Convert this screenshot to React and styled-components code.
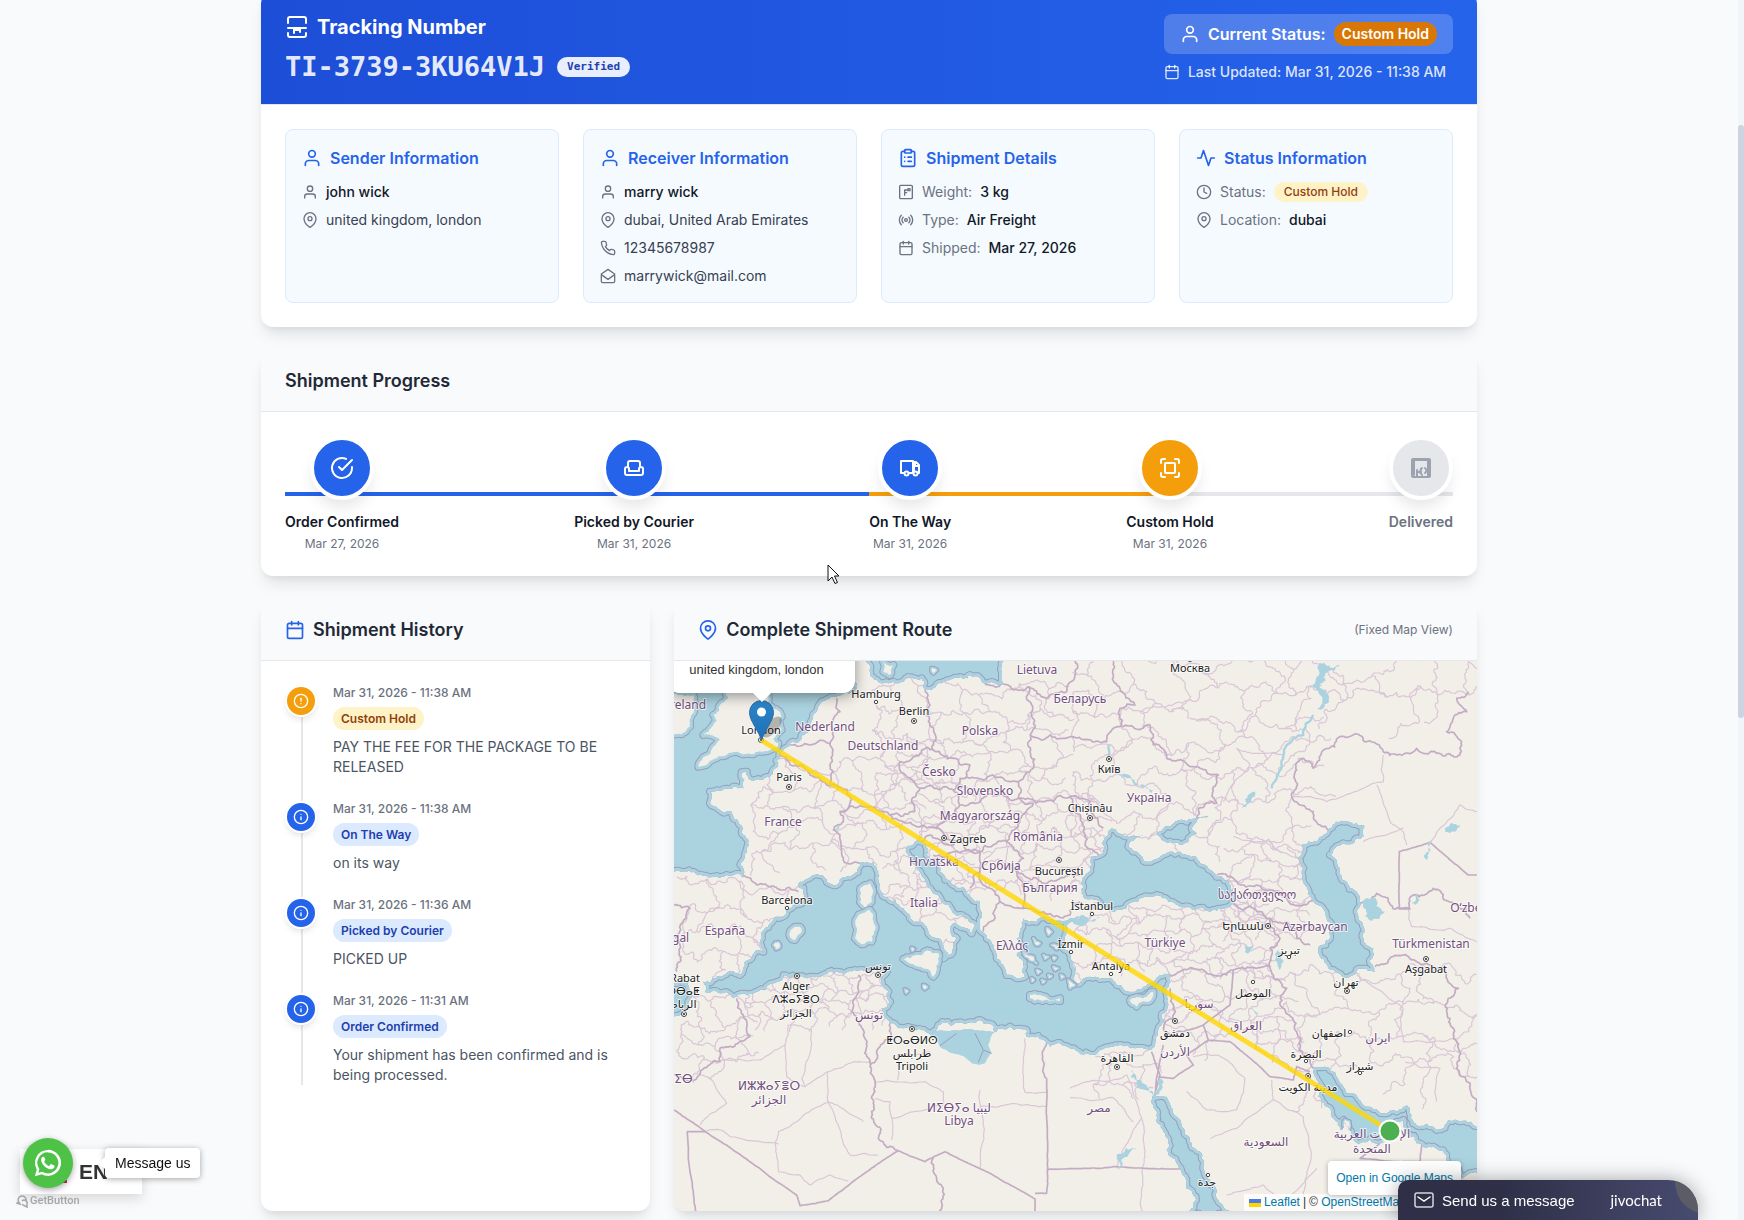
import * as React from "react";
import styled, { createGlobalStyle } from "styled-components";
import {
  FiActivity,
  FiAlertCircle,
  FiCalendar,
  FiCheckCircle,
  FiClock,
  FiInfo,
  FiMapPin,
  FiPhone,
  FiRadio,
  FiUser,
} from "react-icons/fi";
import { ClipboardList } from "lucide-react";

const GlobalStyle = createGlobalStyle`
  * {
    box-sizing: border-box;
  }
  body {
    margin: 0;
    background: #f8fafc;
    color: #111827;
    font-family: Inter, "Noto Sans", sans-serif;
    font-size: 14px;
    line-height: 20px;
  }
  h2, h3, p, ul, ol {
    margin: 0;
    padding: 0;
    list-style: none;
  }
  svg {
    flex-shrink: 0;
  }
`;

const Page = styled.div`
  position: relative;
  height: 100vh;
  overflow: hidden;
  padding-right: 6px;
`;

const Main = styled.main`
  display: flex;
  flex-direction: column;
  gap: 24px;
  max-width: 1280px;
  margin: -8px auto 0;
  padding: 0 32px;
`;

const Card = styled.section`
  display: flex;
  flex-direction: column;
  background: white;
  border-radius: 12px;
  overflow: hidden;
  box-shadow: 0 10px 15px -3px rgba(0, 0, 0, 0.1),
    0 4px 6px -2px rgba(0, 0, 0, 0.05);
`;

const TrackingHeader = styled.header`
  display: flex;
  justify-content: space-between;
  align-items: center;
  padding: 21px 24px;
  color: white;
  background: linear-gradient(to right, #1d4ed8, #2563eb);
  border-bottom: 1px solid #e5e7eb;
  background-clip: padding-box;
`;

const TrackingTitle = styled.h2`
  display: flex;
  align-items: center;
  gap: 8px;
  font-size: 20px;
  line-height: 28px;
  font-weight: 700;
`;

const TrackingNumber = styled.p`
  display: flex;
  align-items: center;
  gap: 12px;
  margin-top: 10px;
  font-family: "DejaVu Sans Mono", monospace;
  font-size: 27px;
  line-height: 32px;
  font-weight: 700;
  color: rgba(255, 255, 255, 0.9);
`;

const Verified = styled.span`
  padding: 0 10px;
  border-radius: 10px;
  background: rgba(255, 255, 255, 0.9);
  color: #1e40af;
  font-size: 11px;
  line-height: 20px;
`;

const StatusBox = styled.div`
  display: flex;
  align-items: center;
  gap: 8px;
  padding: 8px 16px;
  border-radius: 8px;
  background: rgba(255, 255, 255, 0.2);
  font-size: 16px;
  line-height: 24px;
  font-weight: 600;
`;

const StatusPill = styled.span`
  padding: 0 8px;
  border-radius: 12px;
  background: #d97706;
  font-size: 14px;
`;

const Updated = styled.p`
  display: flex;
  align-items: center;
  gap: 8px;
  margin-top: 8px;
  font-weight: 500;
  color: rgba(255, 255, 255, 0.85);
`;

const InfoGrid = styled.div`
  display: grid;
  grid-template-columns: repeat(4, 1fr);
  gap: 24px;
  padding: 24px;
`;

const InfoCard = styled.div`
  padding: 16px;
  border: 1px solid #dbeafe;
  border-radius: 8px;
  background: #f5faff;
`;

const InfoTitle = styled.h3`
  display: flex;
  align-items: center;
  gap: 8px;
  margin-bottom: 12px;
  font-size: 16px;
  line-height: 24px;
  font-weight: 600;
  color: #2563eb;
`;

const InfoList = styled.ul`
  display: flex;
  flex-direction: column;
  gap: 8px;
`;

const InfoRow = styled.li`
  display: flex;
  align-items: center;
  gap: 8px;
  color: #6b7280;
`;

const Value = styled.span`
  color: ${(props) => (props.$strong ? "#111827" : "#374151")};
  font-weight: ${(props) => (props.$strong ? 500 : 400)};
`;

const tones = {
  amber: { back: "#fef3c7", text: "#92400e", solid: "#f59e0b" },
  blue: { back: "#dbeafe", text: "#1e40af", solid: "#2563eb" },
  gray: { back: "#f3f4f6", text: "#6b7280", solid: "#e5e7eb" },
};

const Tag = styled.span`
  padding: 0 10px;
  border-radius: 10px;
  background: ${(props) => tones[props.$tone].back};
  color: ${(props) => tones[props.$tone].text};
  font-size: 12px;
  line-height: 20px;
  font-weight: 500;
`;

const CardHeader = styled.header`
  display: flex;
  align-items: center;
  gap: 8px;
  padding: 16px 24px;
  border-bottom: 1px solid #e5e7eb;
  background: #f9fafb;
  color: #2563eb;
`;

const CardTitle = styled.h2`
  flex: 1;
  font-size: 18px;
  line-height: 28px;
  font-weight: 600;
  color: #1f2937;
`;

const HeaderNote = styled.span`
  font-size: 12px;
  color: #6b7280;
`;

const Steps = styled.ol`
  position: relative;
  display: flex;
  justify-content: space-between;
  margin: 24px;
`;

const Track = styled.li`
  position: absolute;
  top: 56px;
  left: 0;
  right: 0;
  height: 4px;
  background: linear-gradient(
    to right,
    #2563eb 50%,
    #f59e0b 50% 75%,
    #e5e7eb 75%
  );
`;

const Step = styled.li`
  position: relative;
  display: flex;
  flex-direction: column;
  align-items: center;
`;

const StepCircle = styled.span`
  display: grid;
  place-items: center;
  width: 64px;
  height: 64px;
  margin-bottom: 12px;
  border: 4px solid white;
  border-radius: 50%;
  background: ${(props) => tones[props.$tone].solid};
  color: ${(props) => (props.$tone === "gray" ? "#9ca3af" : "white")};
  box-shadow: 0 10px 15px -3px rgba(0, 0, 0, 0.1);
`;

const StepName = styled.span`
  font-weight: 600;
  color: ${(props) => (props.$tone === "gray" ? "#6b7280" : "#111827")};
`;

const StepDate = styled.span`
  margin-top: 4px;
  min-height: 16px;
  font-size: 12px;
  line-height: 16px;
  color: #6b7280;
`;

const Columns = styled.div`
  display: grid;
  grid-template-columns: repeat(3, 1fr);
  gap: 24px;
`;

const MapCard = styled(Card)`
  grid-column: span 2;
`;

const History = styled.ol`
  position: relative;
  display: flex;
  flex-direction: column;
  gap: 24px;
  margin: 24px;
  &::before {
    content: "";
    position: absolute;
    left: 16px;
    top: 0;
    bottom: 0;
    width: 2px;
    background: #e5e7eb;
  }
`;

const Event = styled.li`
  position: relative;
  display: flex;
  align-items: flex-start;
  gap: 16px;
`;

const EventIcon = styled.span`
  display: grid;
  place-items: center;
  width: 32px;
  height: 32px;
  border: 2px solid white;
  border-radius: 50%;
  background: ${(props) => tones[props.$tone].solid};
  color: white;
  box-shadow: 0 4px 6px -1px rgba(0, 0, 0, 0.1);
`;

const EventBody = styled.div`
  flex: 1;
  display: flex;
  flex-direction: column;
  align-items: flex-start;
`;

const EventTime = styled.time`
  font-size: 12px;
  line-height: 16px;
  font-weight: 500;
  color: #6b7280;
`;

const EventTag = styled(Tag)`
  margin: 6px 0 7px;
  padding: 4px 8px;
  border-radius: 12px;
  line-height: 15px;
  font-weight: 600;
`;

const EventText = styled.p`
  color: #4b5563;
`;

const MapBox = styled.div`
  position: relative;
  height: 550px;
  overflow: hidden;
  background: #f2efe9;
  font-family: "Liberation Sans", Arial, sans-serif;
`;

const MapSvg = styled.svg`
  display: block;
  width: 100%;
  height: 100%;
  text {
    font-family: "Noto Sans", "DejaVu Sans", sans-serif;
    text-anchor: middle;
    paint-order: stroke;
    stroke: rgba(255, 255, 255, 0.7);
    stroke-width: 2px;
    stroke-linejoin: round;
  }
`;

const Popup = styled.div`
  position: absolute;
  left: -6px;
  top: -40px;
  width: 187px;
  height: 72px;
  padding: 39px 21px 0;
  border-radius: 12px;
  background: white;
  color: #333;
  font-size: 13px;
  box-shadow: 0 3px 14px rgba(0, 0, 0, 0.4);
  &::after {
    content: "";
    position: absolute;
    left: 84px;
    bottom: -9px;
    border: 10px solid transparent;
    border-top-color: white;
    border-bottom: 0;
  }
`;

const GoogleLink = styled.a`
  position: absolute;
  right: 16px;
  bottom: 16px;
  padding: 7px 8px;
  border-radius: 4px;
  background: white;
  color: #0078a8;
  font-size: 12px;
  text-decoration: none;
  box-shadow: 0 1px 5px rgba(0, 0, 0, 0.3);
`;

const Attribution = styled.div`
  position: absolute;
  right: 0;
  bottom: 0;
  display: flex;
  align-items: center;
  gap: 3px;
  padding: 0 5px;
  background: rgba(255, 255, 255, 0.8);
  color: #333;
  font-size: 12px;
  line-height: 17px;
  a {
    color: #0078a8;
    text-decoration: none;
  }
`;

const Scrollbar = styled.div`
  position: fixed;
  top: 0;
  right: 0;
  bottom: 0;
  width: 6px;
  background: #f1f5f9;
  &::after {
    content: "";
    position: absolute;
    top: 125px;
    height: 593px;
    width: 6px;
    border-radius: 3px;
    background: #cbd5e1;
  }
`;

const Language = styled.div`
  position: fixed;
  left: 20px;
  bottom: 26px;
  display: flex;
  align-items: center;
  gap: 12px;
  width: 122px;
  height: 45px;
  padding-left: 34px;
  background: white;
  color: #333;
  font: 700 21px "Liberation Sans", Arial, sans-serif;
  box-shadow: 0 4px 12px rgba(0, 0, 0, 0.15);
`;

const Flag = styled.span`
  width: 13px;
  height: 22px;
  border-bottom: 3px solid #c8324b;
`;

const WhatsApp = styled.a`
  position: fixed;
  left: 23px;
  bottom: 32px;
  display: grid;
  place-items: center;
  width: 50px;
  height: 50px;
  border-radius: 50%;
  background: #4dc247;
  box-shadow: 0 2px 6px rgba(0, 0, 0, 0.35);
`;

const Bubble = styled.div`
  position: fixed;
  left: 105px;
  bottom: 42px;
  padding: 5px 10px;
  border-radius: 4px;
  background: white;
  color: #111;
  font-family: "Liberation Sans", Arial, sans-serif;
  font-size: 14px;
  box-shadow: 0 1px 6px rgba(0, 0, 0, 0.35);
  &::before {
    content: "";
    position: absolute;
    left: -6px;
    top: 9px;
    border: 6px solid transparent;
    border-right-color: white;
    border-left: 0;
  }
`;

const GetButton = styled.a`
  position: fixed;
  left: 16px;
  bottom: 12px;
  display: flex;
  align-items: center;
  gap: 1px;
  color: #a6a6a6;
  font: 500 11px/14px Roboto, sans-serif;
  text-decoration: none;
`;

const Jivo = styled.button`
  position: fixed;
  right: 46px;
  bottom: 0;
  display: flex;
  align-items: center;
  gap: 8px;
  width: 300px;
  height: 40px;
  padding: 0 36px 0 16px;
  border: 0;
  border-radius: 10px 30px 0 0;
  overflow: hidden;
  background: linear-gradient(95deg, #2f3048 35%, #474b6f);
  color: white;
  font: 15px "Liberation Sans", Arial, sans-serif;
  box-shadow: 0 0 20px rgba(0, 0, 0, 0.35);
`;

const JivoLogo = styled.span`
  margin-left: auto;
  font: 400 15px Lato, sans-serif;
`;

const JivoCorner = styled.svg`
  position: absolute;
  right: 0;
  top: 0;
`;

const Cursor = styled.svg`
  position: absolute;
  left: 827px;
  top: 564px;
`;

/* ---------- icons ---------- */

const Line = ({ size = 24, children }) => (
  <svg
    width={size}
    height={size}
    viewBox="0 0 24 24"
    fill="none"
    stroke="currentColor"
    strokeWidth="2"
    strokeLinecap="round"
    strokeLinejoin="round"
    aria-hidden="true"
  >
    {children}
  </svg>
);

const ParcelIcon = () => (
  <Line>
    <path d="M3 8V4a2 2 0 0 1 2-2h14a2 2 0 0 1 2 2v4M3 18v2a2 2 0 0 0 2 2h14a2 2 0 0 0 2-2v-2M3 13h18M9 13v5M15 13v4M9 15h6" />
  </Line>
);

const MailOpenIcon = () => (
  <Line size={16}>
    <path d="M2 9v11a2 2 0 0 0 2 2h16a2 2 0 0 0 2-2V9L12 2zM2 10l10 7 10-7" />
  </Line>
);

const WeightIcon = () => (
  <Line size={16}>
    <rect x="2.5" y="2" width="19" height="20" rx="1.5" />
    <path d="M10 17V9h4M10 13h3M15 7h3v3h-3z" />
  </Line>
);

const SofaIcon = () => (
  <Line>
    <path d="M6 11V7a2 2 0 0 1 2-2h8a2 2 0 0 1 2 2v4M7 15h10v-2a2 2 0 0 1 4 0v4a2 2 0 0 1-2 2H5a2 2 0 0 1-2-2v-4a2 2 0 0 1 4 0z" />
  </Line>
);

const TruckIcon = () => (
  <Line>
    <path d="M6 17H3V5h12v12h-4M16 15V6h2l3 3v8h-1M17 6v4h4" />
    <circle cx="8.5" cy="17.5" r="2" />
    <circle cx="17.5" cy="17.5" r="2" />
  </Line>
);

const FrameIcon = () => (
  <Line>
    <path d="M3 7V5a2 2 0 0 1 2-2h2M17 3h2a2 2 0 0 1 2 2v2M21 17v2a2 2 0 0 1-2 2h-2M7 21H5a2 2 0 0 1-2-2v-2" />
    <rect x="7" y="7" width="10" height="10" rx="1" />
  </Line>
);

const DeliveredIcon = () => (
  <Line>
    <rect x="3" y="3" width="18" height="18" rx="1" />
    <path d="M5 5v14M5 4h14v16M8 14v6M8 16h3l2 3M13 12a3 3 0 0 0-1 4M16 12a3 3 0 0 1 0 5" />
  </Line>
);

const EnvelopeIcon = () => (
  <svg width="20" height="16" viewBox="0 0 20 16" fill="none" stroke="currentColor" strokeWidth="1.5" aria-hidden="true">
    <rect x="1" y="1" width="18" height="14" rx="2" opacity="0.8" />
    <path d="M4 5l6 4 6-4" strokeLinecap="round" />
  </svg>
);

/* ---------- map drawing ---------- */

// Midpoint displacement, so that a coarse outline gets a natural edge.
// The offset depends only on the end points: shared edges stay shared.
const wobble = (a, b) => {
  const v = Math.sin(a * 12.9898 + b * 78.233) * 43758.5453;
  return v - Math.floor(v) - 0.5;
};

const split = (a, b, amp, out) => {
  const dx = b[0] - a[0];
  const dy = b[1] - a[1];
  const len = Math.hypot(dx, dy);
  if (len < 9) {
    out.push(b);
    return;
  }
  const k = wobble(a[0] + b[0], a[1] + b[1]) * amp;
  const mid = [(a[0] + b[0]) / 2 - dy * k, (a[1] + b[1]) / 2 + dx * k];
  split(a, mid, amp, out);
  split(mid, b, amp, out);
};

const trace = (text, amp = 0.4, closed = false) => {
  const points = text.split(" ").map((pair) => pair.split(",").map(Number));
  if (closed) points.push(points[0]);
  const out = [points[0]];
  for (let i = 1; i < points.length; i++) {
    split(points[i - 1], points[i], amp, out);
  }
  return (
    "M" +
    out.map((p) => `${Math.round(p[0])} ${Math.round(p[1])}`).join("L") +
    (closed ? "Z" : "")
  );
};

// Provinces: a shaken brick pattern over a region.
const mesh = ([x0, y0, x1, y1, cell]) => {
  const at = (i, j) => {
    const x = x0 + (i + (j % 2) / 2) * cell;
    const y = y0 + j * cell;
    return `${x + wobble(x, y) * cell * 0.7},${y + wobble(y, x) * cell * 0.8}`;
  };
  let d = "";
  for (let j = 0; y0 + j * cell < y1; j++) {
    for (let i = 0; x0 + i * cell < x1; i++) {
      d += trace(`${at(i, j)} ${at(i + 1, j)}`, 0.6);
      if ((i + j) % 3) d += trace(`${at(i, j)} ${at(i, j + 1)}`, 0.6);
    }
  }
  return d;
};

const provinces = [
  [230, 330, 760, 640, 62],
  [600, 110, 1180, 420, 66],
  [740, 430, 1290, 720, 50],
  [30, 690, 340, 960, 76],
  [620, 620, 900, 860, 56],
  [1180, 30, 1880, 560, 84],
  [1880, 30, 2400, 220, 100],
  [1220, 750, 1800, 960, 42],
  [1660, 560, 1900, 860, 52],
  [220, 965, 640, 1080, 38],
  [20, 1040, 220, 1230, 56],
  [1780, 960, 2360, 1340, 96],
  [1500, 960, 1840, 1200, 60],
  [1260, 1190, 1440, 1290, 46],
].map(mesh);

const adminLines = [
  "325,1550 325,1430 380,1400 475,1340 505,1410 540,1500 625,1500",
  "155,1215 280,1210 345,1170 355,1110 425,1125 425,1170 395,1270 405,1295 475,1250 600,1220",
  "473,1250 473,1340 580,1400",
  "105,1430 140,1423 325,1467",
  "325,1550 390,1560 420,1590 480,1560 535,1578",
  "90,1410 170,1345 130,1280 90,1258",
  "345,1170 350,1265 405,1295",
  "613,1282 765,1280 820,1310 820,1350 665,1390",
  "683,1275 683,1200 780,1190",
  "930,1305 930,1540",
  "930,1354 1130,1354",
  "1065,1150 1065,1312 1130,1312",
  "615,1330 660,1340 665,1455",
  "1200,1328 1330,1328 1390,1400",
  "1200,1300 1250,1280 1370,1260 1415,1390 1340,1540",
  "1415,1390 1417,1543 1417,1668",
  "1570,1205 1640,1200 1725,1270 1700,1365 1610,1365 1550,1310",
  "1805,1275 1810,1335 1900,1385 1920,1525 1900,1625 1920,1668",
  "1810,1335 1700,1420 1620,1450",
  "1940,1540 1845,1640 1780,1590 1670,1620",
  "1870,425 1970,440 2080,400 2140,380 2140,300",
  "2120,390 2160,500 2200,530 2210,570",
  "2280,562 2370,450 2421,470",
  "2080,560 2120,545 2200,520",
  "2215,765 2225,815 2340,820 2421,860",
  "1690,545 1800,560 1830,590 1895,610",
  "1660,440 1740,330 1700,280 1840,300",
  "2060,960 2200,1060 2200,1160 2360,1150",
  "2205,1220 2310,1240 2300,1340",
].map((line) => trace(line, 0.16));

const borders = [
  "215,665 260,690 330,705 385,710",
  "325,290 360,330 400,330 420,360 470,390 540,425 535,460 510,470 520,500 490,525 510,540 515,590 520,615 570,625",
  "360,270 420,270 480,265 480,210 510,170 500,130",
  "480,265 490,350 480,390",
  "765,105 780,150 775,200 790,285",
  "790,285 730,305 690,320 720,370 750,400 725,440 735,470",
  "790,285 850,310 900,330 885,370 940,375 1000,370 1045,380",
  "750,400 800,400 850,405 870,370 885,370",
  "850,405 870,450",
  "510,470 580,455 620,465 660,480 735,470",
  "660,480 700,500 740,515 800,520 850,480 870,450",
  "870,450 930,440 1000,420 1045,430 1090,445 1050,500 1010,560 930,590 860,560 820,535 800,520",
  "1045,380 1045,430",
  "740,560 780,540 860,560",
  "790,600 850,590 930,590 930,650 900,700",
  "945,88 1075,95 1085,150 1095,220 1080,290 1090,340 1045,380",
  "1075,95 1130,130 1190,110 1215,60 1215,18",
  "1080,240 1140,240 1200,245 1310,260 1330,220 1355,210 1350,160 1395,150 1350,100 1330,60 1330,18",
  "1355,215 1440,210 1450,270 1490,310 1570,335 1645,360 1640,445 1585,460 1580,490",
  "1045,430 1150,440 1200,425 1260,440 1300,520",
  "1200,425 1235,500 1245,570 1285,600",
  "1040,640 1100,670 1170,670 1240,660",
  "1010,560 1060,610 1040,640 1060,700 1060,760 1120,770 1200,780 1230,740",
  "930,650 960,700 990,740 975,790 940,830",
  "990,740 1060,760",
  "1640,660 1700,680 1760,690 1800,705 1850,730 1900,750 1935,740",
  "1690,745 1750,760 1800,790 1830,850 1800,880 1800,935",
  "1800,790 1850,800 1880,850 1920,870",
  "2395,110 2360,130 2390,170 2350,190 2330,230 2375,260 2370,300 2300,295 2240,280 2180,300 2140,290 2090,260 2010,245 1960,285 1930,340 1895,310 1880,345 1865,415 1890,450 1930,470 1950,510 1980,525",
  "2070,745 2120,715 2170,762 2220,762 2230,720 2290,700 2360,750 2400,790",
  "2115,935 2160,910 2200,900 2280,930 2330,970 2365,1000 2350,1150 2370,1190 2360,1240 2400,1300 2421,1370",
  "1500,960 1520,955 1600,945 1690,945 1760,940 1800,935 1810,970 1850,1000 1830,1050 1880,1130 1900,1200 1930,1240",
  "1500,1000 1510,1050 1480,1120 1500,1145 1540,1130",
  "200,1030 220,1080 240,1145 150,1180 150,1220 90,1258 12,1258",
  "565,960 560,1020 545,1070 585,1150 600,1235 615,1310 605,1390 625,1450 685,1487",
  "600,1230 625,1180 665,1150 660,1105",
  "790,1508 800,1570 820,1600 808,1668",
  "20,950 30,880 60,760 12,750",
  "1130,1165 1120,1220 1130,1270",
]
  .map((line) => trace(line, 0.45))
  .concat(
    [
      "2220,762 2188,762 2188,590 2280,562 2395,660 2421,660",
      "1540,1130 1600,1110 1680,1050 1690,945",
      "1600,1110 1615,1155 1680,1160 1800,1265 1870,1275 1880,1235 1920,1250",
      "1615,1155 1550,1200 1570,1230 1510,1270 1465,1265",
      "1445,1190 1470,1260 1455,1320 1480,1170",
      "1130,1270 1130,1615 1095,1615",
      "1130,1543 1545,1543",
      "685,1487 475,1637 390,1652 380,1620 320,1580 12,1365",
      "685,1487 765,1520 825,1490 1095,1632 1095,1668",
      "105,1430 52,1430 77,1668",
      "2130,1465 2070,1510 2170,1520 2250,1520 2260,1440",
    ].map((line) => trace(line, 0.04))
  );

const seas = [
  "-60,-40 1010,-40 1000,18 1000,85 945,88 930,70 900,60 860,68 815,85 790,100 765,105 760,90 755,70 720,68 700,80 670,80 640,85 620,75 600,60 585,10 560,10 560,100 540,115 500,125 455,140 440,170 425,215 395,240 385,262 340,285 328,300 325,335 300,365 270,375 235,368 230,350 215,352 220,400 190,395 165,402 120,410 125,430 120,445 145,462 185,470 190,490 205,500 215,530 235,560 225,600 220,660 170,660 130,665 12,650 -60,650",
  "100,980 140,965 210,960 235,915 280,890 270,865 275,850 285,820 310,795 350,765 400,735 400,700 385,695 390,680 430,660 470,680 500,690 540,665 570,625 610,622 625,650 630,690 655,730 690,755 720,790 770,815 805,850 820,870 835,895 820,910 850,880 860,850 840,830 850,805 890,820 905,835 915,810 870,780 820,745 780,700 770,685 740,640 715,600 710,575 735,560 765,565 770,600 810,650 850,690 900,720 930,745 930,800 935,830 970,870 975,885 1000,930 1010,960 1040,970 1065,965 1060,930 1040,900 1060,880 1040,850 1050,830 1060,790 1100,800 1150,795 1230,785 1190,830 1180,880 1210,920 1210,970 1230,985 1260,965 1320,970 1340,990 1400,1005 1440,985 1470,960 1500,955 1500,975 1490,1000 1495,1050 1475,1110 1455,1170 1440,1185 1380,1180 1330,1175 1290,1185 1265,1200 1200,1180 1140,1175 1130,1165 1070,1145 1070,1125 1020,1115 975,1132 770,1132 730,1120 700,1120 660,1105 640,1080 635,1060 660,1040 655,1010 635,990 650,950 640,945 575,945 520,960 450,965 380,965 310,985 260,1010 230,1020 190,1030 150,1015 105,1010",
  "-40,985 55,980 65,1010 55,1040 30,1080 -40,1105",
  "1325,520 1345,535 1390,545 1420,540 1380,560 1375,575 1410,600 1435,620 1465,610 1500,590 1530,590 1550,600 1590,625 1640,665 1690,710 1695,735 1660,760 1620,770 1575,765 1530,755 1495,740 1480,730 1440,725 1390,740 1340,765 1290,745 1240,725 1235,680 1260,640 1265,605 1300,585 1295,565 1315,540",
  "1460,535 1500,515 1550,500 1580,490 1615,483 1580,500 1565,520 1580,535 1555,560 1530,570 1500,560 1475,555",
  "1895,570 1940,560 1975,525 2010,500 2060,505 2080,510 2080,545 2050,565 1995,580 1980,600 2010,640 2030,680 2060,710 2070,740 2060,770 2075,800 2080,850 2110,880 2115,950 2050,960 1990,945 1950,905 1945,880 1980,850 1985,820 1970,790 1930,740 1905,690 1900,640 1885,610",
  "1450,1320 1490,1325 1520,1385 1560,1460 1600,1515 1610,1565 1640,1605 1685,1690 1555,1690 1545,1565 1520,1525 1490,1485 1495,1455 1460,1385 1445,1345",
  "1930,1235 1965,1235 2000,1265 2030,1315 2080,1350 2140,1375 2180,1370 2210,1350 2220,1370 2230,1405 2300,1425 2460,1432 2460,1570 2370,1570 2330,1515 2290,1475 2240,1465 2210,1435 2200,1395 2160,1425 2130,1465 2070,1465 2040,1445 2035,1415 2020,1395 2010,1425 1985,1385 1970,1355 1945,1325 1955,1305 1935,1265",
]
  .map((line) => trace(line, 0.45, true))
  .join("");

const lakes = [
  "2075,745 2110,725 2145,770 2130,790 2085,785",
  "1205,790 1240,780 1290,785 1270,800 1210,805",
  "1385,1245 1400,1275 1450,1322 1400,1285",
  "1455,1315 1465,1300 1470,1270 1462,1320",
  "1345,360 1380,370 1400,385 1450,405 1445,415 1395,392",
  "1945,30 2010,30 1965,55 1950,90 1960,160 1940,160 1945,110 1928,90",
  "1730,445 1755,410 1745,440 1715,460",
  "2325,520 2370,510 2355,530 2325,530",
  "2275,560 2285,560 2270,615 2265,610",
  "2225,745 2240,715 2250,735 2235,750",
  "1725,870 1750,870 1735,895 1725,890",
  "1822,885 1835,895 1828,945 1820,920",
  "1740,1060 1765,1075 1760,1090",
  "1340,1500 1400,1485 1360,1510 1345,1545",
  "490,520 508,510 500,528",
].map((line) => trace(line, 0.6, true));

// the shallow bay south of its closing line
const sidra = trace(
  "770,1130 800,1155 815,1180 870,1200 905,1225 945,1225 965,1195 955,1170 975,1130",
  0.2,
  true
);

const rivers = ["1930,180 1900,240 1850,270 1840,310 1820,370 1805,400", "1317,270 1317,300"].map(
  (line) => trace(line, 0.3)
);

const islands = [
  "-20,112 70,120 75,150 70,175 60,215 50,225 -20,240",
  "300,90 290,150 310,160 335,185 335,225 310,250 325,265 320,280 280,290 235,295 200,290 170,300 140,310 115,325 85,335 90,320 115,300 130,275 150,255 135,245 100,240 125,215 140,195 130,180 150,150 175,130 170,90",
  "570,705 600,685 605,740 590,760 570,740",
  "560,790 600,765 610,800 605,860 575,868 555,850",
  "700,912 740,900 805,895 800,930 790,965 745,935",
  "360,830 390,815 395,830 375,855 360,845",
  "1080,1020 1110,1020 1170,1030 1170,1038 1110,1035 1080,1030",
  "1380,1035 1420,1030 1450,1010 1430,1040 1400,1055",
  "640,22 670,30 660,60 640,50",
].map((line) => trace(line, 0.4, true));

const islets = [
  "310,870 325,862 330,875 318,882",
  "785,40 800,45 790,55",
  "1090,850 1110,865 1100,870",
  "1130,820 1145,830 1135,840",
  "1120,900 1135,905 1125,912",
  "1150,935 1165,940 1155,945",
  "1100,945 1112,950 1104,956",
  "1060,890 1090,905 1100,925 1080,915",
  "1195,975 1215,990 1200,1000",
  "1145,870 1165,872 1160,882",
  "1115,975 1125,978 1118,984",
  "1085,970 1092,975 1086,980",
  "1135,960 1145,963 1138,968",
  "1150,905 1158,908 1152,914",
  "1172,960 1182,966 1174,970",
  "705,1003 714,1008 708,1014",
  "760,990 772,996 764,1002",
  "725,878 732,882 727,888",
  "2025,1395 2038,1400 2034,1440 2022,1420",
].map((line) => trace(line, 0.4, true));

// [text, x, y] with y in the middle of the line
const countries = [
  ["Lietuva", 363, 9],
  ["Беларусь", 406, 38],
  ["Ireland", 12, 44],
  ["Nederland", 151, 66],
  ["Deutschland", 209, 85],
  ["Polska", 306, 70],
  ["Česko", 265, 111],
  ["Slovensko", 311, 130],
  ["France", 109, 161],
  ["Magyarország", 306, 155],
  ["România", 364, 176],
  ["Hrvatska", 260, 201],
  ["Србија", 327, 205],
  ["България", 376, 227],
  ["Italia", 250, 242],
  ["España", 51, 270],
  ["Portugal", -9, 277],
  ["Україна", 475, 137],
  ["საქართველო", 583, 234],
  ["Azərbaycan", 641, 266],
  ["Oʻzbekiston", 809, 247],
  ["Türkmenistan", 757, 283],
  ["Türkiye", 491, 282],
  ["Ελλάς", 338, 285],
  ["سوريا", 525, 343],
  ["العراق", 572, 365],
  ["الأردن", 501, 391],
  ["ایران", 704, 377],
  ["مصر", 425, 447],
  ["السعودية", 592, 481],
  ["الإمارات العربية", 698, 473],
  ["المتحدة", 698, 488],
  ["تونس", 195, 354],
  ["ⵍⵣⵣⴰⵢⴻⵔ", 95, 425],
  ["الجزائر", 95, 439],
  ["ⵍⵉⴱⵢⴰ ليبيا", 285, 447],
  ["Libya", 285, 460],
  ["ⵎⴰⵖⵔⵉⴱ", -8, 418],
];

// [text, x, y, dot x, dot y, capital]
const cities = [
  ["Hamburg", 202, 33, 202, 41, false],
  ["Berlin", 240, 50, 240, 60, true],
  ["London", 87, 69, 87, 79, true],
  ["Paris", 115, 116, 115, 126, true],
  ["Zagreb", 294, 178, 270, 177, true],
  ["București", 385, 210, 385, 199, true],
  ["İstanbul", 418, 245, 418, 253, false],
  ["Barcelona", 113, 239, 113, 247, false],
  ["Москва", 516, 7, 516, -2, true],
  ["Київ", 435, 108, 435, 98, true],
  ["Chișinău", 416, 147, 416, 157, true],
  ["Երևան", 569, 265, 594, 265, true],
  ["Aşgabat", 752, 308, 752, 298, true],
  ["تهران", 672, 321, 673, 330, true],
  ["تبریز", 615, 289, 615, 296, false],
  ["الموصل", 579, 332, 579, 321, false],
  ["دمشق", 501, 372, 501, 360, true],
  ["اصفهان", 655, 372, 676, 371, false],
  ["البصرة", 632, 393, 632, 400, false],
  ["شیراز", 686, 405, 686, 412, false],
  ["مدينة الكويت", 634, 426, 634, 415, true],
  ["القاهرة", 443, 397, 443, 406, true],
  ["جدة", 533, 521, 534, 514, false],
  ["Antalya", 437, 305, 437, 313, false],
  ["İzmir", 397, 283, 397, 291, false],
  ["تونس", 204, 305, 204, 314, true],
  ["Alger", 122, 325, 123, 315, true],
  ["ⴷⵣⴰⵢⴻⵔ", 122, 338],
  ["الجزائر", 122, 352],
  ["Rabat", 11, 317, 10, 353, true],
  ["ⵔⴱⴰⵟ", 9, 330],
  ["الرباط", 8, 343],
  ["ⵟⵔⴰⴱⵍⵙ", 238, 379, 238, 368, true],
  ["طرابلس", 238, 392],
  ["Tripoli", 238, 405],
];

const RouteMap = () => (
  <MapSvg viewBox="0 0 803 550" preserveAspectRatio="xMinYMin slice">
    <defs>
      <clipPath id="sea">
        <path d={seas} />
      </clipPath>
      <linearGradient id="pin" x1="0" y1="0" x2="0" y2="1">
        <stop offset="0" stopColor="#2e85cb" />
        <stop offset="1" stopColor="#1c6fb4" />
      </linearGradient>
    </defs>
    <g transform="translate(-4 -6) scale(0.33333)" fill="none" strokeLinejoin="round">
      <g stroke="#d9c6d6" strokeWidth="3.5">
        {provinces.concat(adminLines).map((d, i) => (
          <path key={i} d={d} />
        ))}
      </g>
      <g stroke="#c3abc3" strokeWidth="5">
        {borders.map((d, i) => (
          <path key={i} d={d} />
        ))}
      </g>
      <path d={sidra} fill="#aad3df" />
      <path d={seas} fill="#aad3df" />
      <g clipPath="url(#sea)">
        <path d={seas} stroke="#9a9dbd" strokeWidth="24" />
        <path d={seas} stroke="#aad3df" strokeWidth="18" />
        {islands.map((d, i) => (
          <g key={i}>
            <path d={d} stroke="#9a9dbd" strokeWidth="24" />
            <path d={d} stroke="#aad3df" strokeWidth="18" />
            <path d={d} fill="#f2efe9" />
          </g>
        ))}
        {islets.map((d, i) => (
          <g key={i}>
            <path d={d} stroke="#9a9dbd" strokeWidth="15" />
            <path d={d} stroke="#aad3df" strokeWidth="9" />
            <path d={d} fill="#f2efe9" />
          </g>
        ))}
      </g>
      <g fill="#aad3df">
        {lakes.map((d, i) => (
          <path key={i} d={d} />
        ))}
      </g>
      <g stroke="#aad3df" strokeWidth="7">
        {rivers.map((d, i) => (
          <path key={i} d={d} />
        ))}
      </g>
      <path d="M860 1135L810 1172M915 1135L940 1185L925 1222M940 1185L965 1195" stroke="#9a9dbd" strokeWidth="3" />
    </g>
    <g fill="#734f7d" fontSize="12">
      {countries.map(([name, x, y]) => (
        <text key={name + y} x={x} y={y + 4}>
          {name}
        </text>
      ))}
    </g>
    <g fill="#222" fontSize="11">
      {cities.map(([name, x, y, dotX, dotY, capital]) => (
        <g key={name + y}>
          <text x={x} y={y + 4}>
            {name}
          </text>
          {dotX !== undefined && (
            <circle cx={dotX} cy={dotY} r={capital ? 2.5 : 1.7} fill="#fff" stroke="#444" strokeWidth="1" />
          )}
          {capital && <circle cx={dotX} cy={dotY} r="1" />}
        </g>
      ))}
    </g>
    <path d="M87 79L716 470" stroke="#ffd700" strokeOpacity="0.8" strokeWidth="5" />
    <ellipse cx="98" cy="66" rx="13" ry="6" fill="#000" opacity="0.25" transform="rotate(-48 98 66)" />
    <path
      d="M87.500 79.500C85 70 75.500 60 75.500 51.500a12 12 0 0 1 24 0C99.500 60 90 70 87.500 79.500z"
      fill="url(#pin)"
      stroke="#2a6fa5"
    />
    <circle cx="87.5" cy="51" r="4.5" fill="#fff" />
    <circle cx="716" cy="470" r="10.5" fill="#4caf50" stroke="#fff" strokeWidth="2" />
  </MapSvg>
);

/* ---------- content ---------- */

const infoCards = [
  {
    title: "Sender Information",
    icon: <FiUser size={20} />,
    rows: [
      { icon: <FiUser size={16} />, value: "john wick", strong: true },
      { icon: <FiMapPin size={16} />, value: "united kingdom, london" },
    ],
  },
  {
    title: "Receiver Information",
    icon: <FiUser size={20} />,
    rows: [
      { icon: <FiUser size={16} />, value: "marry wick", strong: true },
      { icon: <FiMapPin size={16} />, value: "dubai, United Arab Emirates" },
      { icon: <FiPhone size={16} />, value: "12345678987" },
      { icon: <MailOpenIcon />, value: "marrywick@mail.com" },
    ],
  },
  {
    title: "Shipment Details",
    icon: <ClipboardList size={20} />,
    rows: [
      { icon: <WeightIcon />, label: "Weight:", value: "3 kg", strong: true },
      { icon: <FiRadio size={16} />, label: "Type:", value: "Air Freight", strong: true },
      { icon: <FiCalendar size={16} />, label: "Shipped:", value: "Mar 27, 2026", strong: true },
    ],
  },
  {
    title: "Status Information",
    icon: <FiActivity size={20} />,
    rows: [
      { icon: <FiClock size={16} />, label: "Status:", tag: "Custom Hold" },
      { icon: <FiMapPin size={16} />, label: "Location:", value: "dubai", strong: true },
    ],
  },
];

const steps = [
  { name: "Order Confirmed", date: "Mar 27, 2026", tone: "blue", icon: <FiCheckCircle size={24} /> },
  { name: "Picked by Courier", date: "Mar 31, 2026", tone: "blue", icon: <SofaIcon /> },
  { name: "On The Way", date: "Mar 31, 2026", tone: "blue", icon: <TruckIcon /> },
  { name: "Custom Hold", date: "Mar 31, 2026", tone: "amber", icon: <FrameIcon /> },
  { name: "Delivered", date: "", tone: "gray", icon: <DeliveredIcon /> },
];

const events = [
  {
    time: "Mar 31, 2026 - 11:38 AM",
    name: "Custom Hold",
    text: "PAY THE FEE FOR THE PACKAGE TO BE RELEASED",
    tone: "amber",
  },
  { time: "Mar 31, 2026 - 11:38 AM", name: "On The Way", text: "on its way", tone: "blue" },
  { time: "Mar 31, 2026 - 11:36 AM", name: "Picked by Courier", text: "PICKED UP", tone: "blue" },
  {
    time: "Mar 31, 2026 - 11:31 AM",
    name: "Order Confirmed",
    text: "Your shipment has been confirmed and is being processed.",
    tone: "blue",
  },
];

const App = () => {
  return (
    <Page>
      <GlobalStyle />
      <Main>
        <Card>
          <TrackingHeader>
            <div>
              <TrackingTitle>
                <ParcelIcon />
                Tracking Number
              </TrackingTitle>
              <TrackingNumber>
                TI-3739-3KU64V1J
                <Verified>Verified</Verified>
              </TrackingNumber>
            </div>
            <div>
              <StatusBox>
                <FiUser size={20} />
                Current Status:
                <StatusPill>Custom Hold</StatusPill>
              </StatusBox>
              <Updated>
                <FiCalendar size={16} />
                Last Updated: Mar 31, 2026 - 11:38 AM
              </Updated>
            </div>
          </TrackingHeader>
          <InfoGrid>
            {infoCards.map((card) => (
              <InfoCard key={card.title}>
                <InfoTitle>
                  {card.icon}
                  {card.title}
                </InfoTitle>
                <InfoList>
                  {card.rows.map((row, index) => (
                    <InfoRow key={index}>
                      {row.icon}
                      {row.label && <span>{row.label}</span>}
                      {row.tag && <Tag $tone="amber">{row.tag}</Tag>}
                      {row.value && <Value $strong={row.strong}>{row.value}</Value>}
                    </InfoRow>
                  ))}
                </InfoList>
              </InfoCard>
            ))}
          </InfoGrid>
        </Card>

        <Card>
          <CardHeader>
            <CardTitle>Shipment Progress</CardTitle>
          </CardHeader>
          <Steps>
            <Track aria-hidden="true" />
            {steps.map((step) => (
              <Step key={step.name}>
                <StepCircle $tone={step.tone}>{step.icon}</StepCircle>
                <StepName $tone={step.tone}>{step.name}</StepName>
                <StepDate>{step.date}</StepDate>
              </Step>
            ))}
          </Steps>
        </Card>

        <Columns>
          <Card>
            <CardHeader>
              <FiCalendar size={20} />
              <CardTitle>Shipment History</CardTitle>
            </CardHeader>
            <History>
              {events.map((event) => (
                <Event key={event.name}>
                  <EventIcon $tone={event.tone}>
                    {event.tone === "amber" ? <FiAlertCircle size={16} /> : <FiInfo size={16} />}
                  </EventIcon>
                  <EventBody>
                    <EventTime>{event.time}</EventTime>
                    <EventTag $tone={event.tone}>{event.name}</EventTag>
                    <EventText>{event.text}</EventText>
                  </EventBody>
                </Event>
              ))}
            </History>
          </Card>

          <MapCard>
            <CardHeader>
              <FiMapPin size={20} />
              <CardTitle>Complete Shipment Route</CardTitle>
              <HeaderNote>(Fixed Map View)</HeaderNote>
            </CardHeader>
            <MapBox>
              <RouteMap />
              <Popup>united kingdom, london</Popup>
              <Attribution>
                <svg width="12" height="8" aria-hidden="true">
                  <path fill="#4c7be1" d="M0 0h12v4H0z" />
                  <path fill="#ffd500" d="M0 4h12v4H0z" />
                </svg>
                <a href="#leaflet">Leaflet</a>
                <span>|</span>
                <span>
                  © <a href="#osm">OpenStreetMap</a> contributors
                </span>
              </Attribution>
              <GoogleLink href="#google-maps">Open in Google Maps</GoogleLink>
            </MapBox>
          </MapCard>
        </Columns>
      </Main>

      <Cursor width="13" height="21" viewBox="0 0 13 21">
        <path d="M1 1v16l4-4 3 6.500 2.500-1L7.500 12H12z" fill="#fff" stroke="#111" />
      </Cursor>

      <Language>
        <Flag />
        EN
      </Language>
      <Bubble>Message us</Bubble>
      <WhatsApp href="#whatsapp" aria-label="WhatsApp">
        <svg width="30" height="30" viewBox="0 0 24 24" fill="#fff">
          <path d="M12 1.500a10.400 10.400 0 0 0-9 15.600L1.500 22.500 7 21a10.400 10.400 0 1 0 5-19.500zm0 2a8.400 8.400 0 1 1-4.600 15.500l-3.100.8.800-3A8.400 8.400 0 0 1 12 3.500z" fillRule="evenodd" />
          <path d="M8.300 7c-.7 0-1.800 1-1.800 2.500 0 2.700 4 7.400 7.800 7.400 1.800 0 2.900-1.200 2.900-2.200 0-.4 0-.5-.3-.7l-2.100-1c-.4-.2-.7-.1-.9.200l-.8 1c-.2.200-.4.200-.7.100-1.700-.8-2.700-1.900-3.400-3.300-.1-.2 0-.4.100-.5.400-.5.900-.9.700-1.500L9 7.400C8.800 7 8.600 7 8.300 7z" />
        </svg>
      </WhatsApp>
      <GetButton href="#getbutton">
        <svg width="13" height="13" viewBox="0 0 13 13" fill="none" stroke="currentColor" strokeWidth="1.5">
          <path d="M5 9.500L1 8l2-.5A4 4 0 1 1 10 6M6 6a3 3 0 0 1 5 3v3L8 10.500A3 3 0 0 1 6 9" />
        </svg>
        GetButton
      </GetButton>
      <Jivo type="button">
        <EnvelopeIcon />
        Send us a message
        <JivoLogo>jivochat</JivoLogo>
        <JivoCorner width="23" height="33" viewBox="0 0 23 33" aria-hidden="true">
          <path d="M0 0h23v33C8 28 0 16 0 0z" fill="#5b5c66" />
        </JivoCorner>
      </Jivo>
      <Scrollbar />
    </Page>
  );
};

export default App;
